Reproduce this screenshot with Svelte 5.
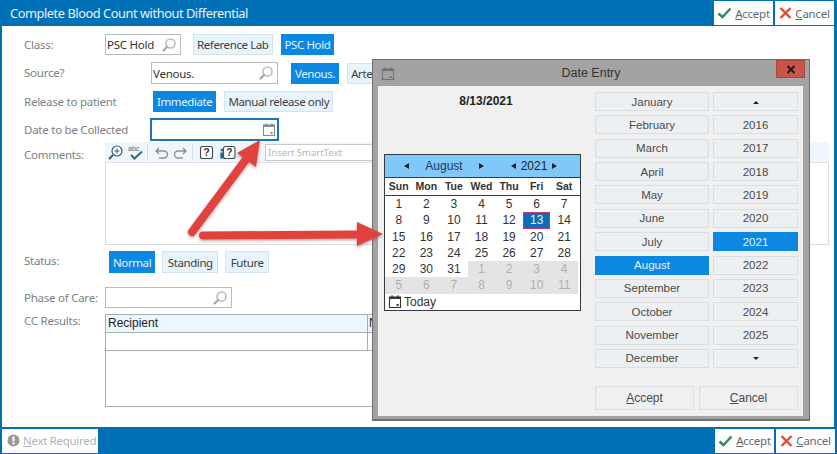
<script>
  const months = ['January','February','March','April','May','June','July','August','September','October','November','December'];
  const years = ['up','2016','2017','2018','2019','2020','2021','2022','2023','2024','2025','down'];
  const wk = ['Sun','Mon','Tue','Wed','Thu','Fri','Sat'];
  const days = [
    ...Array.from({length:31},(_,i)=>({n:i+1,off:false})),
    ...[1,2,3,4,5,6,7,8,9,10,11].map(n=>({n,off:true}))
  ];
</script>

{#snippet search()}
  <svg class="ico" width="16" height="16" viewBox="0 0 16 16"><circle cx="9.5" cy="6.5" r="4.5" fill="none" stroke="#b9bdc0" stroke-width="1.6"/><path d="M6 10 L2.5 13.5" stroke="#a8acaf" stroke-width="2.4" stroke-linecap="round"/></svg>
{/snippet}
{#snippet cal(color)}
  <svg width="14" height="15" viewBox="0 0 14 15"><rect x="1.5" y="3" width="11" height="10.5" fill="none" stroke={color} stroke-width="1.1"/><path d="M1.5 3 H12.5 V5 H1.5 Z" fill={color}/><path d="M4 1.2 V4 M10 1.2 V4" stroke={color} stroke-width="1.2"/><rect x="8.6" y="10" width="2" height="2" fill={color}/></svg>
{/snippet}
{#snippet accept()}
  <button class="act"><svg width="15" height="12" viewBox="0 0 15 12"><path d="M1.5 6.5 L5.5 10 L13.5 1.5" fill="none" stroke="#37875c" stroke-width="2.4"/></svg><span><u>A</u>ccept</span></button>
{/snippet}
{#snippet cancel()}
  <button class="act"><svg width="13" height="12" viewBox="0 0 13 12"><path d="M1.5 1 L11.5 11 M11.5 1 L1.5 11" fill="none" stroke="#dd4f33" stroke-width="2.4"/></svg><span><u>C</u>ancel</span></button>
{/snippet}

<div class="app">
  <header class="bar top">
    <h1>Complete Blood Count without Differential</h1>
    <div class="acts">{@render accept()}{@render cancel()}</div>
  </header>

  <main>
    <div class="row r-class">
      <span class="lab l-short">Class:</span>
      <div class="inp w-class"><span>PSC Hold</span>{@render search()}</div>
      <button class="tg reflab">Reference Lab</button>
      <button class="tg on">PSC Hold</button>
    </div>
    <div class="row r-source">
      <span class="lab l-source">Source?</span>
      <div class="inp w-source"><span>Venous.</span>{@render search()}</div>
      <button class="tg on venous">Venous.</button>
      <button class="tg">Arterial.</button>
    </div>
    <div class="row r-release">
      <span class="lab l-release">Release to patient</span>
      <button class="tg on first">Immediate</button>
      <button class="tg">Manual release only</button>
    </div>
    <div class="row r-date">
      <span class="lab l-date">Date to be Collected</span>
      <div class="inp w-date focus"><span></span>{@render cal('#7f8a92')}</div>
    </div>
    <div class="row r-comments">
      <span class="lab l-short">Comments:</span>
      <div class="editor">
        <div class="tools">
          <svg class="t-zoom" width="17" height="17" viewBox="0 0 17 17"><circle cx="10" cy="7" r="5" fill="#fff" stroke="#35607a" stroke-width="1.2"/><path d="M10 4.5 V9.5 M7.5 7 H12.5" stroke="#35607a" stroke-width="1.1"/><path d="M6 11 L2 15" stroke="#35607a" stroke-width="2"/></svg>
          <svg class="t-abc" width="16" height="17" viewBox="0 0 16 17"><text x="1" y="7" font-size="7" font-family="Liberation Sans" fill="#4a6b80">abc</text><path d="M4 11 L7.5 14.5 L15 7.5" fill="none" stroke="#2e6b80" stroke-width="2"/></svg>
          <i class="sep"></i>
          <svg class="t-undo" width="16" height="15" viewBox="0 0 16 15"><path d="M5 3 L2 6 L5 9 M2 6 H10 A3.5 3.5 0 0 1 10 13 H5" fill="none" stroke="#8a9297" stroke-width="1.4"/></svg>
          <svg class="t-redo" width="16" height="15" viewBox="0 0 16 15"><path d="M11 3 L14 6 L11 9 M14 6 H6 A3.5 3.5 0 0 0 6 13 H11" fill="none" stroke="#8a9297" stroke-width="1.4"/></svg>
          <i class="sep"></i>
          <svg class="t-help" width="15" height="15" viewBox="0 0 15 15"><rect x="1.5" y="1.5" width="12" height="12" rx="2" fill="#fff" stroke="#3c4a52" stroke-width="1.1"/><text x="7.5" y="11" text-anchor="middle" font-size="10" font-weight="700" font-family="Liberation Sans" fill="#333">?</text></svg>
          <svg class="t-person" width="17" height="15" viewBox="0 0 17 15"><rect x="4.5" y="1.5" width="11.5" height="12" rx="2" fill="#fff" stroke="#3c4a52" stroke-width="1.1"/><text x="10.2" y="11" text-anchor="middle" font-size="10" font-weight="700" font-family="Liberation Sans" fill="#333">?</text><circle cx="3" cy="5" r="1.5" fill="#1d6a94"/><rect x="1.3" y="7.5" width="3.4" height="6" fill="#1d6a94"/></svg>
          <div class="smart">Insert SmartText</div>
        </div>
        <div class="area"></div>
      </div>
    </div>
    <div class="row r-status">
      <span class="lab l-status">Status:</span>
      <button class="tg on first">Normal</button>
      <button class="tg">Standing</button>
      <button class="tg">Future</button>
    </div>
    <div class="row r-phase">
      <span class="lab l-short">Phase of Care:</span>
      <div class="inp w-phase"><span></span>{@render search()}</div>
    </div>
    <div class="row r-cc">
      <span class="lab l-short">CC Results:</span>
      <div class="table">
        <div class="tr th"><span class="c1">Recipient</span><span class="c2">Name</span></div>
        <div class="tr"><span class="c1"></span><span class="c2"></span></div>
      </div>
    </div>
  </main>

  <footer class="bar bottom">
    <button class="act next" disabled>
      <svg width="13" height="13" viewBox="0 0 13 13"><circle cx="6.5" cy="6.5" r="6" fill="#9a9a9a"/><rect x="5.5" y="2.5" width="2" height="5" fill="#fff"/><rect x="5.5" y="8.5" width="2" height="2" fill="#fff"/></svg>
      <span><u>N</u>ext Required</span>
    </button>
    <div class="acts">{@render accept()}{@render cancel()}</div>
  </footer>

  <section class="dialog">
    <div class="dtitle">
      <span class="dico">{@render cal('#6e7478')}</span>
      <span class="dname">Date Entry</span>
      <button class="close" aria-label="Close"><svg width="10" height="9" viewBox="0 0 10 9"><path d="M1.5 1 L8.5 8 M8.5 1 L1.5 8" stroke="#2a1512" stroke-width="2.1"/></svg></button>
    </div>
    <div class="dbody">
      <div class="dleft">
        <div class="cur">8/13/2021</div>
        <div class="calendar">
          <div class="chead">
            <div class="mgroup"><i class="tri l"></i><span>August</span><i class="tri r"></i></div>
            <div class="ygroup"><i class="tri l"></i><span>2021</span><i class="tri r"></i></div>
          </div>
          <div class="wk">{#each wk as w}<span>{w}</span>{/each}</div>
          <div class="grid">
            {#each days as d}
              <span class:off={d.off} class:sel={d.n===13 && !d.off}>{d.n}</span>
            {/each}
          </div>
          <div class="today">{@render cal('#333')}<span>Today</span></div>
        </div>
      </div>
      <div class="dright">
        <div class="pick">
          {#each months as m, i}
            <button class="pb" class:cur-pb={m==='August'}>{m}</button>
            <button class="pb" class:cur-pb={years[i]==='2021'}>
              {#if years[i]==='up'}<i class="tri u"></i>{:else if years[i]==='down'}<i class="tri d"></i>{:else}{years[i]}{/if}
            </button>
          {/each}
        </div>
        <div class="dacts">
          <button class="pb big"><u>A</u>ccept</button>
          <button class="pb big"><u>C</u>ancel</button>
        </div>
      </div>
    </div>
  </section>

  <svg class="arrows" width="837" height="454" viewBox="0 0 837 454">
    <defs><filter id="sh" x="-10%" y="-10%" width="120%" height="120%"><feDropShadow dx="0" dy="1.5" stdDeviation="1.5" flood-color="#6b2a2a" flood-opacity=".45"/></filter></defs>
    <g filter="url(#sh)">
      <path d="M192 232 L247 158" stroke="#e2433d" stroke-width="8" stroke-linecap="round" fill="none"/>
      <path d="M260 140 L256 167 L237 153 Z" fill="#e2433d"/>
      <path d="M203 235.5 L360 234.5" stroke="#e2433d" stroke-width="8" stroke-linecap="round" fill="none"/>
      <path d="M383 234 L357 222 L357 246 Z" fill="#e2433d"/>
    </g>
  </svg>
</div>

<style>
  :global(body){margin:0;background:#fff;}
  .app{position:relative;width:837px;height:454px;overflow:hidden;display:flex;flex-direction:column;font-family:"Noto Sans","Open Sans",sans-serif;font-size:11.5px;color:#333;background:#fff;}
  button{font:inherit;margin:0;padding:0;cursor:default;}
  .bar{background:#0070b6;display:flex;align-items:center;justify-content:space-between;flex:none;}
  .top{height:26px;padding:0 3px 0 10px;}
  .bottom{height:27px;padding:0 2px;margin-top:auto;}
  h1{margin:0;font-size:12.8px;letter-spacing:-.44px;font-weight:400;color:#e6f3fb;}
  .acts{display:flex;gap:2px;align-self:center;}
  .act{height:24px;width:59px;background:#fff;border:0;display:flex;align-items:center;justify-content:center;gap:3px;color:#5b6a72;font-size:11.5px;letter-spacing:-.25px;}
  .next{width:96px;color:#b0b4b6;justify-content:flex-start;padding-left:5px;white-space:nowrap;letter-spacing:-.3px;}
  main{flex:1;min-height:0;border-left:2px solid #0070b6;border-right:3px solid #0070b6;padding-left:22px;}
  .row{display:flex;align-items:center;}
  .lab{color:#7b7f82;flex:none;font-size:11.5px;letter-spacing:-.25px;}
  .l-short{width:81px;}
  .l-source{width:127px;}
  .l-release{width:129px;}
  .l-date{width:126px;}
  .l-status{width:85px;}
  .r-class{margin-top:8px;height:21px;}
  .r-source{margin-top:7px;height:22px;}
  .r-source .lab{margin-bottom:2px;}
  .r-release{margin-top:7px;height:21px;}
  .r-date{margin-top:6px;height:23px;}
  .r-comments{margin-top:1px;align-items:flex-start;}
  .r-comments .lab{margin-top:5px;}
  .r-status{margin-top:6px;height:22px;}
  .r-status .lab{margin-bottom:3px;}
  .r-phase{margin-top:14px;height:21px;}
  .r-cc{margin-top:6px;align-items:flex-start;}
  .r-cc .lab{margin-top:-1px;}
  .inp{box-sizing:border-box;height:100%;border:1px solid #b8bcbf;display:flex;align-items:center;justify-content:space-between;padding:0 3px 0 1px;color:#333;background:#fff;letter-spacing:-.25px;}
  .inp.focus{border:2px solid #1f73b8;padding:0 1px 0 1px;}
  .w-class{width:76px;}
  .w-source{width:127px;}
  .w-date{width:129px;}
  .w-phase{width:127px;}
  .ico{flex:none;}
  .tg{box-sizing:border-box;height:21px;padding:0 3px;background:#e8f4fb;border:1px solid #d3e4ee;color:#3b3f42;margin-left:8px;white-space:nowrap;letter-spacing:-.4px;}
  .tg.on{background:#0a88e2;border-color:#0a88e2;color:#e4f4ff;}
  .reflab{margin-left:12px;}
  .venous{margin-left:13px;}
  .tg.first{margin-left:0;}
  .r-status .tg{height:22px;margin-left:7px;padding:0 4.5px;}
  .r-status .tg.first{margin-left:0;padding:0 3px;}
  .editor{width:724px;flex:none;}
  .tools{height:20px;background:#eff7fd;display:flex;align-items:center;padding-left:2px;}
  .t-abc{margin-left:3px;}
  .sep{width:1px;height:18px;background:#d6dfe5;margin-left:4px;}
  .t-undo{margin-left:6px;}
  .t-redo{margin-left:2px;}
  .t-help{margin-left:6px;}
  .t-person{margin-left:5px;}
  .smart{box-sizing:border-box;height:17px;width:470px;margin-left:29px;border:1px solid #c8ccd0;background:#fff;color:#b4b8ba;font-size:9.5px;line-height:15px;padding-left:2px;white-space:nowrap;}
  .area{box-sizing:border-box;height:83px;border:1px solid #d9dcde;border-top:1px solid #dde3e8;background:#fff;}
  .table{box-sizing:border-box;width:600px;height:93px;border:1px solid #a9adb0;}
  .tr{display:flex;height:18px;box-sizing:border-box;border-bottom:1px solid #a9adb0;}
  .th{background:#eef6fd;color:#222;font-family:"Liberation Sans",sans-serif;font-size:12px;line-height:17px;}
  .c1{box-sizing:border-box;width:262px;padding-left:2px;border-right:1px solid #a9adb0;}
  .c2{padding-left:1px;}

  .arrows{position:absolute;left:0;top:0;pointer-events:none;}

  .dialog{position:absolute;left:372px;top:59px;width:438px;height:362px;box-sizing:border-box;background:#a3a3a3;border:1px solid #6f6f6f;border-bottom-width:2px;display:flex;flex-direction:column;font-family:"Liberation Sans",Arial,sans-serif;font-size:12px;color:#333;}
  .dtitle{position:relative;height:26px;flex:none;display:flex;align-items:center;justify-content:center;}
  .dname{font-size:12.5px;color:#333;}
  .dico{position:absolute;left:8px;top:6px;}
  .close{position:absolute;right:4px;top:0;width:29px;height:18px;background:#c9544b;border:1px solid #a9483f;display:flex;align-items:center;justify-content:center;}
  .dbody{flex:1;margin:0 6px 3px 5px;background:#f0f0f0;display:flex;min-height:0;}
  .dleft{width:217px;flex:none;padding-left:6px;box-sizing:border-box;}
  .cur{width:204px;font-weight:700;text-align:center;margin-top:8px;height:14px;line-height:14px;color:#222;}
  .calendar{box-sizing:border-box;width:197px;height:157px;margin-top:46px;border:1px solid #333c44;background:#fff;}
  .chead{height:22px;background:#80c8fa;border-bottom:1px solid #333c44;display:flex;align-items:center;color:#1c3c55;font-size:12px;}
  .mgroup{display:flex;justify-content:space-between;align-items:center;width:80px;margin-left:19px;}
  .ygroup{display:flex;justify-content:space-between;align-items:center;width:46px;margin-left:27px;color:#222;}
  .wk{height:17px;display:grid;grid-template-columns:repeat(7,1fr);padding:0 2px 0 0;border-bottom:1px solid #333c44;text-align:center;font-size:10.5px;font-weight:700;line-height:17px;color:#333;}
  .grid{display:grid;grid-template-columns:repeat(7,1fr);grid-auto-rows:16.3px;padding:0 2px 0 0;text-align:center;line-height:16.3px;color:#333;}
  .grid span{box-sizing:border-box;}
  .off{background:#e4e4e4;color:#b0b0b0;}
  .sel{background:#0a6db5;color:#e8f4ff;border:1px solid #d0365f;line-height:14.3px;}
  .today{display:flex;align-items:center;gap:2px;padding-left:3px;height:16px;color:#333;}
  .tri{display:inline-block;width:0;height:0;border-style:solid;border-color:transparent;}
  .tri.l{border-width:3.5px 5px 3.5px 0;border-right-color:#222;}
  .tri.r{border-width:3.5px 0 3.5px 5px;border-left-color:#222;}
  .tri.u{border-width:0 3.5px 3.5px;border-bottom-color:#222;vertical-align:2px;}
  .tri.d{border-width:3.5px 3.5px 0;border-top-color:#222;vertical-align:2px;}
  .dright{width:204px;flex:none;}
  .pick{display:grid;grid-template-columns:114px 85px;column-gap:4px;row-gap:4.36px;grid-auto-rows:19px;margin-top:6px;}
  .pb{box-sizing:border-box;background:#edf0f3;border:1px solid #dcdfe2;color:#4a4a4a;font-family:"Liberation Sans",Arial,sans-serif;font-size:11.5px;display:block;}
  .cur-pb{background:#0a88e2;border-color:#0a88e2;color:#e4f4ff;}
  .dacts{display:flex;gap:5px;margin-top:18px;}
  .big{height:24px;width:99px;background:#eef0f2;font-size:12px;}
</style>
